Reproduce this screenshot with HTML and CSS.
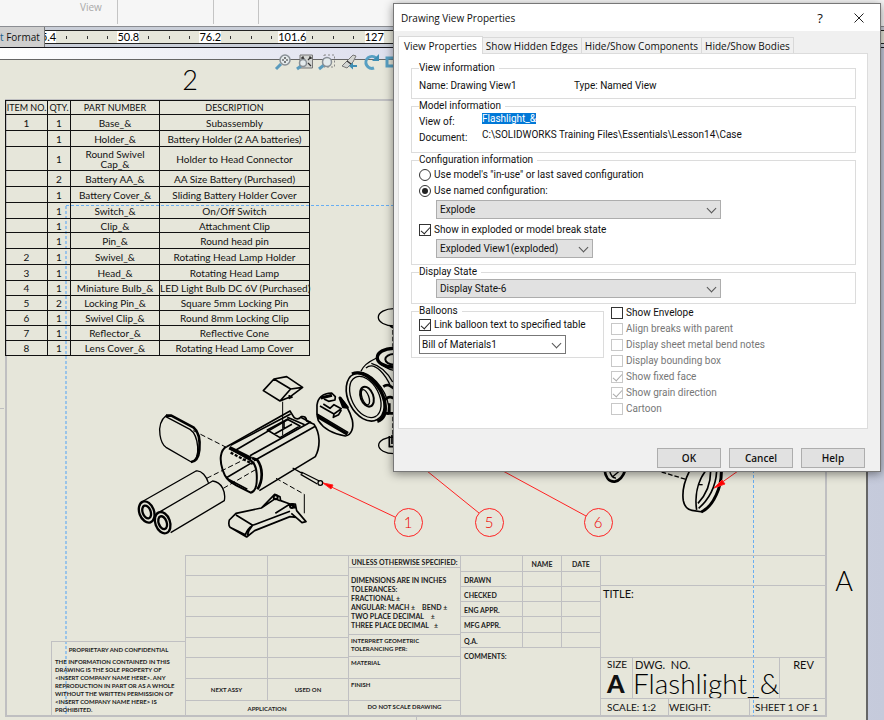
FILE: index.html
```html
<!DOCTYPE html>
<html lang="en">
<head>
<meta charset="utf-8">
<title>Drawing View Properties</title>
<link rel="stylesheet" href="styles.css">
</head>
<body>
<div class="app">
  <header class="ribbon">
    <div class="ribbon-group ribbon-view">View</div>
    <div class="ribbon-group ribbon-wide"></div>
    <div class="ribbon-group ribbon-narrow"></div>
  </header>
  <div class="ruler-bar">
    <button class="format-tab" type="button"><span class="tab-accent">t</span> Format</button>
    <div class="ruler">
      <div class="ruler-segment"><span class="ruler-value first"><b>5.4</b></span><i></i><i></i><i></i></div>
      <div class="ruler-segment"><span class="ruler-value"><b>50.8</b></span><i></i><i></i><i></i></div>
      <div class="ruler-segment"><span class="ruler-value"><b>76.2</b></span><i></i><i></i><i></i></div>
      <div class="ruler-segment"><span class="ruler-value"><b>101.6</b></span><i></i><i></i><i></i></div>
      <div class="ruler-segment"><span class="ruler-value"><b>127</b></span><i></i><i></i><i></i></div>
    </div>
  </div>

  <main class="workspace">
    <div class="sheet"></div>
    <svg class="drawing" viewBox="0 48 884 672" width="884" height="672" aria-hidden="true">
      <g fill="none" stroke="#bfbfc1">
        <rect x="6" y="100" width="820" height="616" stroke-width="2"/>
        <path d="M416.500 717V720M0 408.500H4"/>
      </g>
      <g fill="none" stroke="#000" stroke-width="4" stroke-linejoin="round" transform="translate(130 300) scale(.3333)">
        <!-- end plate -->
        <path d="M110 345C94 358 86 380 90 405C93 425 98 435 108 442L184 486C199 483 205 463 203 440C201 415 195 398 180 388L106 349"/>
        <path stroke-width="8" d="M108 347L124 347L190 382C206 395 211 420 208 450C206 470 198 485 183 486"/>
        <path stroke-width="3" stroke-dasharray="16 8" d="M190 392L285 440M230 535L350 475M280 565L375 510M438 535L523 583"/>
        <!-- batteries -->
        <path d="M40 603L198 513C215 510 230 530 235 548M92 634L248 543C275 546 288 575 283 602L122 698"/>
        <g transform="rotate(-20 50 636)"><ellipse cx="50" cy="636" rx="22" ry="33" stroke-width="7"/><ellipse cx="50" cy="636" rx="12" ry="20" stroke-width="7"/></g>
        <g transform="rotate(-20 98 668)" fill="#e6e6da"><ellipse cx="98" cy="668" rx="22" ry="33" stroke-width="7"/><ellipse cx="98" cy="668" rx="12" ry="20" stroke-width="7"/></g>
        <!-- case -->
        <path stroke-width="5" d="M290 440L480 333L492 352Q503 362 514 350Q529 347 530 363L552 373C571 400 572 440 556 470L388 572"/>
        <path stroke-width="5" d="M302 436L482 342M318 450L476 357M360 467L542 366M372 482L556 379M288 534L366 488M288 534L352 568"/>
        <path stroke-width="6" d="M290 440C270 450 268 480 278 510C285 535 300 545 320 557L362 578C378 575 382 550 380 520C378 495 370 485 360 480L300 445"/>
        <path stroke-width="11" d="M298 443L364 476"/>
        <path stroke-width="7" stroke-dasharray="9 5" d="M302 458L368 492"/>
        <path stroke-width="8" d="M366 474L382 480C398 502 401 540 382 568"/>
        <path stroke-width="5" d="M412 390L472 358L510 378L450 413ZM434 402L486 373M462 362V388M512 352L544 368M472 352L524 374"/>
        <!-- switch -->
        <path stroke-width="5" d="M400 272L432 237L470 230L518 262L478 292L450 303ZM432 237L482 267L518 262M482 267L450 303M478 285V295L488 290"/>
        <path stroke-width="3" d="M458 305V405"/>
        <!-- swivel cap -->
        <path stroke-width="5" d="M561 345V315C564 292 580 280 605 279L616 290L615 300L596 304L582 297M561 345L565 362C580 385 610 402 646 408C664 405 672 385 667 360C660 335 648 312 630 292M570 318L612 342L634 326L612 314L600 325L580 312M612 342L610 352L626 344L634 330M561 342L655 398"/>
        <path stroke-width="9" d="M572 294L606 286M630 294L652 322L640 320ZM563 350L652 403"/>
        <!-- head flange -->
        <g transform="rotate(-27 706 291)"><ellipse cx="706" cy="291" rx="51" ry="77" stroke-width="5"/><ellipse cx="706" cy="291" rx="41" ry="66"/></g>
        <path stroke-width="10" d="M666 222C705 205 755 260 764 305C770 338 762 358 742 364"/>
        <path stroke-width="4" d="M676 218C720 208 768 268 776 318L774 345"/>
        <g transform="rotate(-20 711 290)"><ellipse cx="711" cy="290" rx="19" ry="31" stroke-width="6"/><ellipse cx="706" cy="290" rx="10" ry="24"/></g>
        <path d="M693 214C700 195 718 184 740 174M708 204C735 180 770 230 782 260M724 190C755 198 775 222 788 246M742 180C760 200 778 210 795 212"/>
        <ellipse cx="790" cy="173" rx="48" ry="28" stroke-width="10"/>
        <ellipse cx="792" cy="178" rx="26" ry="16" stroke-width="6"/>
        <path stroke-width="8" d="M760 260C775 248 785 262 795 268M765 300C775 285 790 292 797 300M768 340H800M778 310V338"/>
        <ellipse cx="792" cy="52" rx="47" ry="26"/>
        <ellipse cx="792" cy="436" rx="46" ry="25"/>
        <path stroke-width="5" d="M780 78L795 86M778 408V440H795M786 405V432"/>
        <path stroke-dasharray="14 6" d="M789 90V140M789 350V404"/>
        <!-- pin -->
        <path d="M488 504L518 521M514 516L568 543M512 523L562 552"/><circle cx="571" cy="549" r="7"/>
        <path stroke-width="3" d="M523 583V640"/>
        <!-- clip -->
        <path stroke-width="5" d="M298 660L318 640L394 624L434 583L450 590L452 602L480 612L496 612L500 632L528 665L516 668L498 652L480 650L374 692L350 711L300 682C295 676 296 668 298 660ZM318 645L368 676L480 634M368 676C360 685 354 696 352 708M394 624L436 596L450 602M436 640L480 612L496 624M484 640L512 664M300 682L346 704C350 694 356 684 366 678"/>
        <circle cx="437" cy="592" r="6" stroke-width="6"/><circle cx="486" cy="618" r="6" stroke-width="6"/>
      </g>
      <g fill="none" stroke="#000" stroke-width="4" transform="translate(390 460) scale(.3333)">
        <path stroke-width="8" d="M644 30C646 50 656 66 674 65C690 62 700 48 706 30"/>
        <path d="M658 30C662 46 668 55 678 54M668 50L692 30"/>
        <path stroke-dasharray="14 6" d="M815 36L888 58"/>
        <path stroke-width="5" d="M898 34C884 62 876 95 880 122C884 142 892 149 906 151L938 156M946 34C922 66 914 110 920 150M962 34C962 75 945 108 924 130M980 34C978 80 956 120 926 145"/>
        <path stroke-width="9" d="M994 30C996 78 972 138 934 156"/>
        <path d="M926 74H938"/>
      </g>
      <g fill="none" stroke="#68aef2" stroke-dasharray="3 2">
        <path d="M66 206V716" stroke-width="2" stroke-opacity=".6"/><path d="M66 205.500H394M753.500 205V716"/>
      </g>
      <g fill="none" stroke="#f22">
        <path d="M323 483L395 517M427 471L479 513M503 471L586 516M738 471L714 488"/>
        <circle cx="408.500" cy="522.500" r="14"/><circle cx="489.500" cy="522.500" r="14"/><circle cx="598.500" cy="522.500" r="14"/>
        <path fill="#f00" d="M323 483L333 485L331 489ZM714 488L722 480L725 484Z"/>
      </g>
      <g class="balloon-number" text-anchor="middle">
        <text x="408" y="528">1</text><text x="489" y="528">5</text><text x="598" y="528">6</text>
      </g>
      <g class="zone-label" text-anchor="middle">
        <text x="190" y="90">2</text><text x="844" y="591">A</text>
      </g>
    </svg>

    <nav class="view-tools" aria-label="View tools">
      <button type="button" aria-label="Zoom to fit"><svg viewBox="0 0 16 16"><path class="handle" d="M1 15L6 10"/><circle class="lens" cx="10" cy="6" r="5"/><path class="mark" d="M10 3V5M10 7V9M7 6H9M11 6H13"/></svg></button>
      <button type="button" aria-label="Zoom to area"><svg viewBox="0 0 16 16"><path class="frame" d="M3 1H15.500V14H3Z"/><path class="mark" d="M5 3L8 6M14 3L11 6M14 12L11 9M5 3H7M5 3V5M14 3H12M14 3V5"/><path class="handle" d="M0 15L4 12"/><circle class="lens" cx="6" cy="9" r="3.500"/></svg></button>
      <button type="button" aria-label="Zoom selection"><svg viewBox="0 0 16 16"><path class="dashed" d="M5 1H15.500V13H5Z"/><path class="handle" d="M0 15L5 11"/><circle class="lens" cx="8" cy="8" r="4.500"/></svg></button>
      <button type="button" aria-label="Previous view"><svg viewBox="0 0 16 16"><path class="frame" d="M1 12L7 6L12 1L15 2L12 8L6 14Z"/><path class="mark" d="M6 7L10 10"/><path class="arrow" d="M8 12L12 8.500V11H16V13H12V15.500Z"/></svg></button>
      <button type="button" aria-label="Rotate view"><svg viewBox="0 0 16 16"><path class="turn" d="M11 14A6 6 0 1 1 13 4"/><path class="arrow" d="M16 0V7H9Z"/></svg></button>
      <button type="button" aria-label="Section view"><svg viewBox="0 0 16 16"><path class="turn" d="M2 4H14V12H2Z"/></svg></button>
    </nav>

    <table class="bom">
      <colgroup><col class="col-item"><col class="col-qty"><col class="col-part"><col></colgroup>
      <thead><tr class="short"><th>ITEM NO.</th><th>QTY.</th><th>PART NUMBER</th><th>DESCRIPTION</th></tr></thead>
      <tbody>
        <tr><td>1</td><td>1</td><td>Base_&amp;</td><td>Subassembly</td></tr>
        <tr><td></td><td>1</td><td>Holder_&amp;</td><td>Battery Holder (2 AA batteries)</td></tr>
        <tr class="tall"><td></td><td>1</td><td>Round Swivel<br>Cap_&amp;</td><td>Holder to Head Connector</td></tr>
        <tr><td></td><td>2</td><td>Battery AA_&amp;</td><td>AA Size Battery (Purchased)</td></tr>
        <tr><td></td><td>1</td><td>Battery Cover_&amp;</td><td>Sliding Battery Holder Cover</td></tr>
        <tr><td></td><td>1</td><td>Switch_&amp;</td><td>On/Off Switch</td></tr>
        <tr class="short"><td></td><td>1</td><td>Clip_&amp;</td><td>Attachment Clip</td></tr>
        <tr><td></td><td>1</td><td>Pin_&amp;</td><td>Round head pin</td></tr>
        <tr><td>2</td><td>1</td><td>Swivel_&amp;</td><td>Rotating Head Lamp Holder</td></tr>
        <tr><td>3</td><td>1</td><td>Head_&amp;</td><td>Rotating Head Lamp</td></tr>
        <tr class="mid"><td>4</td><td>1</td><td>Miniature Bulb_&amp;</td><td>LED Light Bulb DC 6V (Purchased)</td></tr>
        <tr class="mid"><td>5</td><td>2</td><td>Locking Pin_&amp;</td><td>Square 5mm Locking Pin</td></tr>
        <tr class="mid"><td>6</td><td>1</td><td>Swivel Clip_&amp;</td><td>Round 8mm Locking Clip</td></tr>
        <tr class="mid"><td>7</td><td>1</td><td>Reflector_&amp;</td><td>Reflective Cone</td></tr>
        <tr class="mid"><td>8</td><td>1</td><td>Lens Cover_&amp;</td><td>Rotating Head Lamp Cover</td></tr>
      </tbody>
    </table>

    <section class="title-block">
      <div class="notice">
        <h2>PROPRIETARY AND CONFIDENTIAL</h2>
        <p>THE INFORMATION CONTAINED IN THIS<br>DRAWING IS THE SOLE PROPERTY OF<br>&lt;INSERT COMPANY NAME HERE&gt;. ANY<br>REPRODUCTION IN PART OR AS A WHOLE<br>WITHOUT THE WRITTEN PERMISSION OF<br>&lt;INSERT COMPANY NAME HERE&gt; IS<br>PROHIBITED.</p>
      </div>
      <div class="application">
        <div></div><div></div><div></div><div></div><div></div><div></div>
        <div></div><div></div><div></div><div></div><div></div><div></div>
        <div>NEXT ASSY</div><div>USED ON</div>
        <div class="span-all">APPLICATION</div>
      </div>
      <div class="tolerances">
        <div class="centered">UNLESS OTHERWISE SPECIFIED:</div>
        <div class="tolerance-list">DIMENSIONS ARE IN INCHES<br>TOLERANCES:<br>FRACTIONAL &#177;<br>ANGULAR: MACH &#177; &emsp;BEND &#177;<br>TWO PLACE DECIMAL &emsp;&#177;<br>THREE PLACE DECIMAL &ensp;&#177;</div>
        <div>INTERPRET GEOMETRIC<br>TOLERANCING PER:</div>
        <div>MATERIAL</div>
        <div>FINISH</div>
        <div class="centered">DO NOT SCALE DRAWING</div>
      </div>
      <div class="approvals">
        <div></div><div class="centered">NAME</div><div class="centered">DATE</div>
        <div>DRAWN</div><div></div><div></div>
        <div>CHECKED</div><div></div><div></div>
        <div>ENG APPR.</div><div></div><div></div>
        <div>MFG APPR.</div><div></div><div></div>
        <div>Q.A.</div><div></div><div></div>
        <div class="comments">COMMENTS:</div>
      </div>
      <div class="identity">
        <div class="company"></div>
        <div class="doc-title">TITLE:</div>
        <div class="number-row">
          <div class="size"><span>SIZE</span><strong>A</strong></div>
          <div class="dwg"><span>DWG. &nbsp;NO.</span><em>Flashlight_&amp;</em></div>
          <div class="rev">REV</div>
        </div>
        <div class="scale-row"><div>SCALE: 1:2</div><div>WEIGHT:</div><div>SHEET 1 OF 1</div></div>
      </div>
    </section>
  </main>

  <form class="dialog" role="dialog" aria-labelledby="dialog-title">
    <div class="dialog-head">
      <h1 id="dialog-title">Drawing View Properties</h1>
      <button class="head-button" type="button" aria-label="Context help">?</button>
      <button class="head-button" type="button" aria-label="Close"><svg viewBox="0 0 10 10"><path d="M.5.5L9.500 9.500M9.500.5L.5 9.500"/></svg></button>
    </div>
    <div class="dialog-body">
      <div class="tabs" role="tablist">
        <button class="tab active" role="tab" type="button" aria-selected="true">View Properties</button>
        <button class="tab" role="tab" type="button">Show Hidden Edges</button>
        <button class="tab" role="tab" type="button">Hide/Show Components</button>
        <button class="tab" role="tab" type="button">Hide/Show Bodies</button>
      </div>
      <div class="panel" role="tabpanel">
        <fieldset>
          <legend>View information</legend>
          <div class="info-row"><span>Name: Drawing View1</span><span>Type: Named View</span></div>
        </fieldset>
        <fieldset class="model">
          <legend>Model information</legend>
          <div class="model-row"><label for="view-of">View of:</label><span class="value"><output id="view-of" class="selected">Flashlight_&amp;</output></span></div>
          <div class="model-row"><label for="document">Document:</label><output id="document" class="value">C:\SOLIDWORKS Training Files\Essentials\Lesson14\Case</output></div>
        </fieldset>
        <fieldset class="configuration">
          <legend>Configuration information</legend>
          <label class="choice"><input type="radio" name="config">Use model's "in-use" or last saved configuration</label>
          <label class="choice"><input type="radio" name="config" checked>Use named configuration:</label>
          <div class="select wide"><select aria-label="Named configuration"><option>Explode</option></select></div>
          <label class="choice break-state"><input type="checkbox" checked>Show in exploded or model break state</label>
          <div class="select medium"><select aria-label="Exploded view"><option>Exploded View1(exploded)</option></select></div>
        </fieldset>
        <fieldset class="display-state">
          <legend>Display State</legend>
          <div class="select wide"><select aria-label="Display state"><option>Display State-6</option></select></div>
        </fieldset>
        <div class="columns">
          <fieldset class="balloons">
            <legend>Balloons</legend>
            <label class="choice"><input type="checkbox" checked>Link balloon text to specified table</label>
            <div class="select light"><select aria-label="Balloon table"><option>Bill of Materials1</option></select></div>
          </fieldset>
          <div class="options">
            <label class="choice"><input type="checkbox">Show Envelope</label>
            <label class="choice"><input type="checkbox" disabled>Align breaks with parent</label>
            <label class="choice"><input type="checkbox" disabled>Display sheet metal bend notes</label>
            <label class="choice"><input type="checkbox" disabled>Display bounding box</label>
            <label class="choice"><input type="checkbox" checked disabled>Show fixed face</label>
            <label class="choice"><input type="checkbox" checked disabled>Show grain direction</label>
            <label class="choice"><input type="checkbox" disabled>Cartoon</label>
          </div>
        </div>
      </div>
      <div class="actions">
        <button type="button">OK</button><button type="button">Cancel</button><button type="button">Help</button>
      </div>
    </div>
  </form>
</div>
</body>
</html>
```
FILE: styles.css
```css
* { box-sizing: border-box; }
body { margin: 0; font-family: "Liberation Sans", sans-serif; color: #111; }
button { font: inherit; color: inherit; padding: 0; border: 0; background: none; }

.app { position: relative; display: flex; flex-direction: column; min-height: 100vh; overflow: hidden; }

/* Ribbon and ruler */
.ribbon { display: flex; height: 26px; padding-bottom: 2px; background: #f6f6f6; font: 10px/15px "Open Sans", sans-serif; color: #a9a9a9; }
.ribbon-group { border-right: 1px solid #c4c4c4; }
.ribbon-view { width: 118px; padding-left: 80px; }
.ribbon-wide { width: 96px; }
.ribbon-narrow { width: 45px; }
.ruler-bar { display: flex; height: 22px; padding: 3px 0; border-top: 1px solid #8b8d92; border-bottom: 1px solid #15151c; background: #c9ced8; }
.format-tab { position: relative; z-index: 1; flex: none; width: 45px; margin: -3px 0; text-align: left; white-space: nowrap; font: 10px/19px "Open Sans", sans-serif; background: #cfcfcf; border-right: 1px solid #777; }
.tab-accent { color: #17608c; }
.ruler { display: flex; flex: 1; margin-left: -9px; border: solid #222; border-width: 1px 0; background: #e6e6da; font: 11px/12px Lato, sans-serif; }
.ruler-segment { display: grid; grid-template-columns: repeat(4, 1fr); flex: none; width: 82px; align-items: center; justify-items: center; }
.ruler-value { display: flex; justify-content: center; width: 20px; }
.ruler-value.first { justify-content: flex-end; }
.ruler-value b { flex: none; background: #fff; font-weight: 400; color: #000; }
.ruler-segment i { width: 1px; height: 3px; background: #333; }

/* Drawing sheet */
.workspace { position: relative; flex: 1; min-height: 672px; padding: 11px 16px 0 0; background: linear-gradient(90deg, #fff, #d9dbeb 50%, #c5cadb); }
.sheet { height: 100%; min-height: 661px; background: #e6e6da; border: solid #666; border-width: 1px 2px 0 0; }
.drawing { position: absolute; top: 0; left: 0; }
.balloon-number { font: 300 15px Lato, sans-serif; fill: #e00; }
.zone-label { font: 300 27px Lato, sans-serif; fill: #000; }

.view-tools { position: absolute; top: 6px; left: 275px; display: flex; gap: 6px; }
.view-tools button { width: 16px; height: 16px; }
.view-tools svg { display: block; width: 16px; height: 16px; fill: none; overflow: visible; }
.handle { stroke: #5a9bbd; stroke-width: 3; }
.lens { fill: #e4eaec; stroke: #899096; stroke-width: 1.5; }
.mark { stroke: #333; stroke-width: 1.2; }
.frame { fill: #d3d5d2; stroke: #777; }
.dashed { stroke: #888; stroke-dasharray: 2 2; }
.arrow { fill: #3e8eb4; }
.turn { stroke: #579fc2; stroke-width: 3; }

.bom { position: absolute; top: 52px; left: 5px; width: 305px; table-layout: fixed; border-collapse: collapse; font: 10px/10px Lato, sans-serif; color: #111; text-align: center; }
.bom th, .bom td { padding: 0; border: 1px solid #111; font-weight: 400; white-space: nowrap; }
.bom tr { height: 16px; }
.bom .short { height: 14px; }
.bom .mid { height: 15px; }
.bom .tall { height: 24px; }
.bom th { font-size: 9px; }
.col-item { width: 42px; }
.col-qty { width: 23px; }
.col-part { width: 89px; }

/* Title block */
.title-block { position: absolute; top: 507px; left: 51px; display: grid; grid-template-columns: 134px 163px 112px 140px 226px; height: 161px; font: 700 7px/8px Lato, sans-serif; color: #222; white-space: nowrap; }
.title-block > div > div { border: solid #c0c0c2; border-width: 1px 0 0 1px; }
.notice { align-self: end; height: 75px; border: solid #c0c0c2; border-width: 1px 0 0 1px; padding: 4px 3px 0; font-size: 6px; }
.notice h2 { margin: 0 0 4px; font: inherit; text-align: center; }
.notice p { margin: 0; }
.application { display: grid; grid-template-columns: 82px 81px; grid-template-rows: 20px 21px 20px 21px 20px 21px 22px 16px; }
.application div { display: grid; place-items: center; font-size: 6px; }
.span-all { grid-column: 1 / -1; }
.tolerances { display: grid; grid-template-rows: 12px 67px 22px 22px 22px 16px; }
.tolerances > div { padding: 2px; font-size: 6px; }
.title-block .tolerances > .tolerance-list { padding-top: 8px; font-size: 7px; line-height: 9px; }
.centered { text-align: center; }
.title-block .tolerances > .centered:first-child { font-size: 7px; }
.approvals { display: grid; grid-template-columns: 62px 39px 39px; grid-template-rows: 16px 15px 15px 15px 16px 15px 69px; }
.approvals > div { padding: 4px 3px; line-height: 8px; }
.approvals .comments { grid-column: 1 / -1; }
.identity { display: grid; grid-template-rows: 30px 72px 41px 18px; font: 11px/14px Lato, sans-serif; color: #111; }
.doc-title { padding: 1px 2px; }
.number-row, .scale-row { display: grid; }
.number-row { grid-template-columns: 31px 147px 48px; }
.scale-row { grid-template-columns: 67px 81px 78px; font-size: 10px; line-height: 17px; }
.number-row > div + div, .scale-row > div + div { border-left: 1px solid #c0c0c2; }
.scale-row div:first-child { padding-left: 6px; }
.scale-row div:last-child { padding-left: 5px; }
.size { padding-left: 6px; }
.size span, .dwg span { display: block; line-height: 13px; }
.size span { font-size: 10px; }
.size strong { display: block; font: 900 25px/24px Lato, sans-serif; }
.dwg span { padding-left: 2px; }
.dwg em { display: block; font: 300 28px/24px Lato, sans-serif; color: #000; }
.rev { text-align: center; }

/* Dialog */
.dialog { position: absolute; top: 3px; right: 3px; width: 488px; border: 1px solid #777; background: #f0f0f0; box-shadow: 0 2px 9px rgba(0, 0, 0, .45); font: 10px/12px Roboto, sans-serif; }
.dialog-head { display: flex; align-items: center; height: 27px; padding: 0 8px 0 7px; background: #fff; font: 10px/16px "Open Sans", sans-serif; }
.dialog-head h1 { flex: 1; margin: 0; font: inherit; }
.head-button { width: 26px; height: 24px; margin-left: 13px; font-size: 13px; font-weight: 500; }
.head-button svg { display: block; width: 10px; height: 10px; margin: auto; fill: none; stroke: #222; }
.dialog-body { padding: 4px 12px 3px 4px; }
.tabs { display: flex; align-items: flex-end; height: 18px; font: 500 10px/14px "Open Sans", sans-serif; }
.tab { height: 16px; padding: 0 3px; border: 1px solid #d9d9d9; border-width: 1px 1px 0 0; white-space: nowrap; }
.tab.active { position: relative; height: 18px; margin-bottom: -1px; padding: 0 5px; border-left-width: 1px; background: #fff; }
.panel { min-height: 376px; padding: 8px 11px 8px 12px; border: 1px solid #dcdcdc; background: #fff; }
fieldset { min-width: 0; margin: 0 0 1px; padding: 0 7px 6px; border: 1px solid #dcdcdc; }
legend { height: 12px; margin: 0; padding: 0 4px 0 0; }
.info-row { display: grid; grid-template-columns: 155px 1fr; margin-top: 6px; }
.model { padding-bottom: 7px; }
.model legend, .configuration legend { margin-bottom: 1px; }
.model-row { display: grid; grid-template-columns: 63px 1fr; height: 16px; line-height: 18px; }
.model-row .value { line-height: 12px; }
.selected { background: #0078d7; color: #fff; }
.choice { display: flex; align-items: center; height: 16px; white-space: nowrap; }
.choice:has(:disabled) { color: #777; }
.choice input { appearance: none; position: relative; flex: none; width: 12px; height: 12px; margin: 0 3px 0 0; border: 1px solid #333; background: #fff; }
.choice input[type="radio"] { border-radius: 50%; }
.choice input[type="radio"]:checked::before { content: ""; position: absolute; inset: 2px; border-radius: 50%; background: #222; }
.choice input[type="checkbox"]:checked::before { content: ""; position: absolute; left: 3px; top: 0; width: 4px; height: 8px; border: solid #222; border-width: 0 1px 1px 0; transform: rotate(42deg); }
.choice input:disabled { border-color: #c8c8c8; }
.choice input[type="checkbox"]:disabled::before { border-color: #aaa; }
.break-state { margin-top: 3px; }
.select { position: relative; margin: 1px 0 0 17px; }
.select select { appearance: none; display: block; width: 100%; height: 19px; padding: 0 3px; border: 1px solid #adadad; border-radius: 0; background: #e1e1e1; font: inherit; color: #111; }
.select::after { content: ""; position: absolute; top: 5px; right: 6px; width: 6px; height: 6px; border: solid #555; border-width: 0 1px 1px 0; transform: rotate(45deg); }
.select.wide { width: 285px; }
.select.medium { width: 157px; }
.select.light { width: 147px; margin: 2px 0 0; }
.select.light select { padding: 0 2px; border-color: #777; background: #fff; }
.display-state { padding-bottom: 5px; }
.columns { display: flex; gap: 7px; margin-top: 1px; }
.balloons { width: 193px; align-self: flex-start; padding-bottom: 3px; }
.actions { display: flex; justify-content: flex-end; gap: 8px; padding: 19px 3px 0 0; }
.actions button { width: 64px; height: 20px; border: 1px solid #adadad; background: #e1e1e1; font: 600 10px/16px "Open Sans", sans-serif; }
```
